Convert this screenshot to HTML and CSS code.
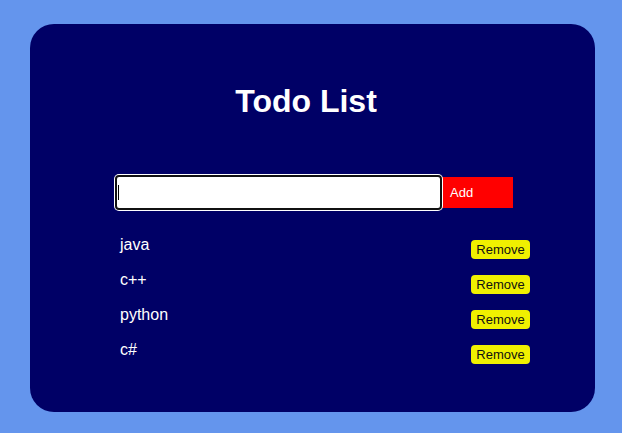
FILE: index.html
```html
<!DOCTYPE html>
<html>
<head>
<meta charset="utf-8">
<title>Todo List</title>
<link rel="stylesheet" href="styles.css">
</head>
<body>
<div class="card">
  <h1 class="title">Todo List</h1>
  <form class="add-row">
    <div class="input-wrap">
      <input class="todo-input" type="text">
      <span class="caret"></span>
    </div>
    <button class="add-btn" type="button">Add</button>
  </form>
  <ul class="todo-list">
    <li class="todo-item"><span class="todo-text">java</span><button class="remove-btn" type="button">Remove</button></li>
    <li class="todo-item"><span class="todo-text">c++</span><button class="remove-btn" type="button">Remove</button></li>
    <li class="todo-item"><span class="todo-text">python</span><button class="remove-btn" type="button">Remove</button></li>
    <li class="todo-item"><span class="todo-text">c#</span><button class="remove-btn" type="button">Remove</button></li>
  </ul>
</div>
</body>
</html>
```

FILE: styles.css
```css
html, body {
  margin: 0;
  padding: 0;
}
body {
  background: #6495ed;
  font-family: "Liberation Sans", Arial, sans-serif;
  padding: 24px 27px 21px 30px;
  height: 433px;
  box-sizing: border-box;
}
.card {
  background: #000066;
  border-radius: 24px;
  width: 565px;
  height: 388px;
  box-sizing: border-box;
  padding-top: 59px;
  display: flex;
  flex-direction: column;
}
.title {
  margin: 0;
  font-size: 32px;
  font-weight: bold;
  color: #ffffff;
  text-align: center;
  padding-right: 13px;
  line-height: 37px;
}
.add-row {
  margin: 55px 0 0 0;
  padding-left: 85px;
  display: flex;
  align-items: center;
}
.input-wrap {
  position: relative;
  display: flex;
}
.todo-input {
  width: 327px;
  height: 35px;
  box-sizing: border-box;
  border: 2px solid #111111;
  border-radius: 4px;
  box-shadow: 0 0 0 1px #ffffff;
  background: #ffffff;
  outline: none;
  padding: 0;
  margin: 0;
}
.caret {
  position: absolute;
  left: 3px;
  top: 10px;
  width: 1px;
  height: 15px;
  background: #000000;
}
.add-btn {
  width: 71px;
  height: 31px;
  background: #ff0000;
  color: #ffffff;
  border: none;
  border-radius: 0;
  font-family: "Liberation Sans", Arial, sans-serif;
  font-size: 13px;
  text-align: left;
  padding: 0 0 0 8px;
  margin: 0;
}
.todo-list {
  list-style: none;
  margin: 26px 0 0 0;
  padding: 0 65px 0 90px;
  display: flex;
  flex-direction: column;
  gap: 12px;
}
.todo-item {
  display: flex;
  justify-content: space-between;
  align-items: flex-start;
}
.todo-text {
  color: #ffffff;
  font-size: 16px;
  line-height: 18px;
}
.remove-btn {
  margin-top: 4px;
  width: 59px;
  height: 19px;
  background: #f0f000;
  color: #111111;
  border: none;
  border-radius: 4px;
  font-family: "Liberation Sans", Arial, sans-serif;
  font-size: 13px;
  padding: 0;
  line-height: 19px;
}
```
